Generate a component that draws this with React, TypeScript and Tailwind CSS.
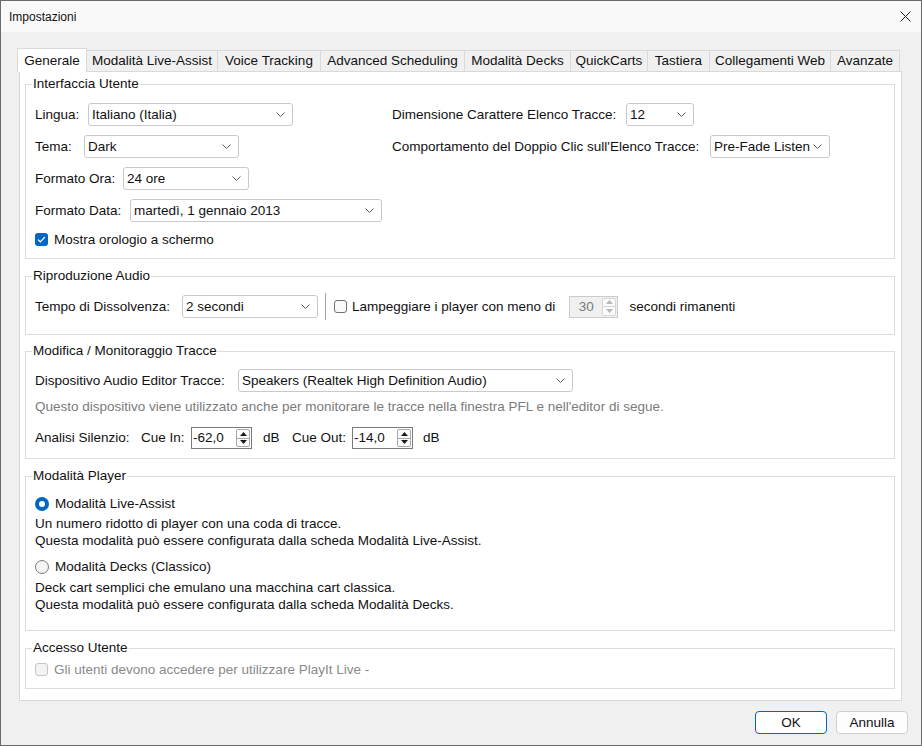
import React from "react";

function Chevron() {
  return (
    <svg width="9" height="5" viewBox="0 0 9 5" className="shrink-0">
      <path d="M0.5 0.5 L4.5 4.5 L8.5 0.5" fill="none" stroke="#5c5c5c" strokeWidth="1" />
    </svg>
  );
}

function Select({ w, value }: { w: string; value: string }) {
  return (
    <div
      className={`${w} h-[23px] shrink-0 bg-white border border-[#c9c9c9] rounded-[3px] flex items-center justify-between pl-[3px] pr-[7px]`}
    >
      <span className="whitespace-nowrap">{value}</span>
      <Chevron />
    </div>
  );
}

function SpinArrows({ disabled }: { disabled?: boolean }) {
  const tri = disabled ? "#b8b8b8" : "#1a1a1a";
  const bd = disabled ? "border-[#d6d6d6]" : "border-[#a8a8a8]";
  return (
    <div className={`w-[14px] my-[1px] mr-[1px] flex flex-col border ${bd} rounded-[2px] bg-[#fbfbfb]`}>
      <div className={`flex-1 flex items-center justify-center border-b ${bd}`}>
        <svg width="7" height="4" viewBox="0 0 7 4">
          <path d="M0 4 L3.5 0 L7 4 Z" fill={tri} />
        </svg>
      </div>
      <div className="flex-1 flex items-center justify-center">
        <svg width="7" height="4" viewBox="0 0 7 4">
          <path d="M0 0 L3.5 4 L7 0 Z" fill={tri} />
        </svg>
      </div>
    </div>
  );
}

function Spin({ w, value, disabled }: { w: string; value: string; disabled?: boolean }) {
  return (
    <div
      className={`${w} h-[22px] shrink-0 flex items-stretch border ${
        disabled ? "border-[#cccccc] bg-[#f0f0f0] text-[#7a7a7a]" : "border-[#7a7a7a] bg-white"
      }`}
    >
      <span className={`flex-1 flex items-center ${disabled ? "justify-center" : "pl-[1px]"}`}>{value}</span>
      <SpinArrows disabled={disabled} />
    </div>
  );
}

function CheckBox({ checked, disabled }: { checked?: boolean; disabled?: boolean }) {
  if (checked) {
    return (
      <div className="w-[13px] h-[13px] shrink-0 rounded-[3px] bg-[#0067c0] flex items-center justify-center">
        <svg width="9" height="7" viewBox="0 0 9 7">
          <path d="M1 3.6 L3.3 5.8 L8 1" fill="none" stroke="white" strokeWidth="1.2" />
        </svg>
      </div>
    );
  }
  return (
    <div
      className={`w-[13px] h-[13px] shrink-0 rounded-[3px] border ${
        disabled ? "border-[#c6c6c6] bg-[#f3f3f3]" : "border-[#707070] bg-[#f9f9f9]"
      }`}
    />
  );
}

function Radio({ checked }: { checked?: boolean }) {
  if (checked) {
    return (
      <div className="w-[14px] h-[14px] shrink-0 rounded-full bg-[#0067c0] flex items-center justify-center">
        <div className="w-[6px] h-[6px] rounded-full bg-white" />
      </div>
    );
  }
  return <div className="w-[14px] h-[14px] shrink-0 rounded-full border border-[#7a7a7a] bg-[#f5f5f5]" />;
}

function Group({
  title,
  children,
  className,
}: {
  title: string;
  children: React.ReactNode;
  className: string;
}) {
  return (
    <fieldset className={`border border-[#dcdcdc] pl-[9px] pr-[9px] ${className}`}>
      <legend className="ml-[-3px] px-[1px] leading-[16px]">{title}</legend>
      {children}
    </fieldset>
  );
}

const tabs: { label: string; w: string }[] = [
  { label: "Modalità Live-Assist", w: "w-[131px]" },
  { label: "Voice Tracking", w: "w-[103px]" },
  { label: "Advanced Scheduling", w: "w-[144px]" },
  { label: "Modalità Decks", w: "w-[106px]" },
  { label: "QuickCarts", w: "w-[77px]" },
  { label: "Tastiera", w: "w-[62px]" },
  { label: "Collegamenti Web", w: "w-[121px]" },
  { label: "Avanzate", w: "w-[69px]" },
];

export default function App() {
  return (
    <div className="w-[922px] h-[746px] bg-[#f0f0f0] border border-[#6a6a6a] flex flex-col text-[13.5px] leading-[16px] text-[#111] font-['Liberation_Sans',Arial,sans-serif] overflow-hidden">
      {/* Title bar */}
      <div className="h-[31px] shrink-0 bg-[#f9f9f9] flex items-center justify-between pl-[8px] pr-[10px]">
        <span className="text-[12px]">Impostazioni</span>
        <svg width="11" height="11" viewBox="0 0 11 11">
          <path d="M0.5 0.5 L10.5 10.5 M10.5 0.5 L0.5 10.5" stroke="#222" strokeWidth="1" />
        </svg>
      </div>

      {/* Tabs */}
      <div className="mt-[15px] pl-[16px] flex items-end h-[24px] shrink-0">
        <div className="relative z-10 w-[70px] h-[24px] mb-[-1px] bg-white border border-b-0 border-[#d9d9d9] flex items-center justify-center">
          Generale
        </div>
        {tabs.map((t) => (
          <div
            key={t.label}
            className={`${t.w} h-[21px] bg-[#f0f0f0] border-t border-r border-[#d9d9d9] flex items-center justify-center whitespace-nowrap`}
          >
            {t.label}
          </div>
        ))}
      </div>

      {/* Panel */}
      <div className="ml-[18px] w-[883px] h-[630px] shrink-0 bg-white border border-[#d9d9d9] pl-[5px] pr-[6px] pt-[4px] flex flex-col">
        <Group title="Interfaccia Utente" className="pb-[10px]">
          <div className="flex mt-[11px]">
            <div className="w-[357px] flex flex-col gap-[9px]">
              <div className="flex items-center">
                <span className="w-[53px]">Lingua:</span>
                <Select w="w-[205px]" value="Italiano (Italia)" />
              </div>
              <div className="flex items-center">
                <span className="w-[49px]">Tema:</span>
                <Select w="w-[155px]" value="Dark" />
              </div>
              <div className="flex items-center">
                <span className="w-[88px]">Formato Ora:</span>
                <Select w="w-[126px]" value="24 ore" />
              </div>
              <div className="flex items-center">
                <span className="w-[95px] whitespace-nowrap">Formato Data:</span>
                <Select w="w-[252px]" value="martedì, 1 gennaio 2013" />
              </div>
              <div className="flex items-center h-[17px] gap-[6px]">
                <CheckBox checked />
                <span>Mostra orologio a schermo</span>
              </div>
            </div>
            <div className="flex flex-col gap-[9px]">
              <div className="flex items-center">
                <span className="w-[234px] whitespace-nowrap">Dimensione Carattere Elenco Tracce:</span>
                <Select w="w-[68px]" value="12" />
              </div>
              <div className="flex items-center">
                <span className="w-[318px] whitespace-nowrap">Comportamento del Doppio Clic sull'Elenco Tracce:</span>
                <Select w="w-[120px]" value="Pre-Fade Listen" />
              </div>
            </div>
          </div>
        </Group>

        <Group title="Riproduzione Audio" className="mt-[9px] pb-[16px]">
          <div className="flex items-center mt-[11px] h-[23px]">
            <span className="w-[147px] whitespace-nowrap">Tempo di Dissolvenza:</span>
            <Select w="w-[136px]" value="2 secondi" />
            <div className="ml-[7px] w-px h-[27px] bg-[#a6a6a6]" />
            <div className="ml-[8px] flex items-center gap-[5px]">
              <CheckBox />
              <span className="whitespace-nowrap">Lampeggiare i player con meno di</span>
            </div>
            <div className="ml-[14px]">
              <Spin w="w-[49px]" value="30" disabled />
            </div>
            <span className="ml-[11px] whitespace-nowrap">secondi rimanenti</span>
          </div>
        </Group>

        <Group title="Modifica / Monitoraggio Tracce" className="mt-[8px] pb-[9px]">
          <div className="flex items-center mt-[10px]">
            <span className="w-[203px] whitespace-nowrap">Dispositivo Audio Editor Tracce:</span>
            <Select w="w-[335px]" value="Speakers (Realtek High Definition Audio)" />
          </div>
          <div className="mt-[7px] text-[#7b7b7b] whitespace-nowrap">
            Questo dispositivo viene utilizzato anche per monitorare le tracce nella finestra PFL e nell'editor di segue.
          </div>
          <div className="flex items-center mt-[12px]">
            <span className="w-[106px] whitespace-nowrap">Analisi Silenzio:</span>
            <span className="w-[50px] whitespace-nowrap">Cue In:</span>
            <Spin w="w-[61px]" value="-62,0" />
            <span className="ml-[11px] w-[29px]">dB</span>
            <span className="w-[60px] whitespace-nowrap">Cue Out:</span>
            <Spin w="w-[61px]" value="-14,0" />
            <span className="ml-[10px]">dB</span>
          </div>
        </Group>

        <Group title="Modalità Player" className="mt-[9px] pb-[17px]">
          <div className="flex items-center gap-[6px] mt-[11px] h-[17px]">
            <Radio checked />
            <span>Modalità Live-Assist</span>
          </div>
          <div className="mt-[3px] leading-[17px]">
            <div>Un numero ridotto di player con una coda di tracce.</div>
            <div>Questa modalità può essere configurata dalla scheda Modalità Live-Assist.</div>
          </div>
          <div className="flex items-center gap-[6px] mt-[9px] h-[17px]">
            <Radio />
            <span>Modalità Decks (Classico)</span>
          </div>
          <div className="mt-[4px] leading-[17px]">
            <div>Deck cart semplici che emulano una macchina cart classica.</div>
            <div>Questa modalità può essere configurata dalla scheda Modalità Decks.</div>
          </div>
        </Group>

        <Group title="Accesso Utente" className="mt-[9px] pb-[10px]">
          <div className="flex items-center gap-[6px] mt-[5px] h-[17px] text-[#8a8a8a]">
            <CheckBox disabled />
            <span>Gli utenti devono accedere per utilizzare PlayIt Live -</span>
          </div>
        </Group>
      </div>

      {/* Buttons */}
      <div className="flex justify-end gap-[9px] pr-[13px] mt-[10px]">
        <div className="w-[72px] h-[23px] bg-white border border-[#0067c0] rounded-[4px] flex items-center justify-center">
          OK
        </div>
        <div className="w-[72px] h-[23px] bg-[#fdfdfd] border border-[#d0d0d0] rounded-[4px] flex items-center justify-center">
          Annulla
        </div>
      </div>
    </div>
  );
}
